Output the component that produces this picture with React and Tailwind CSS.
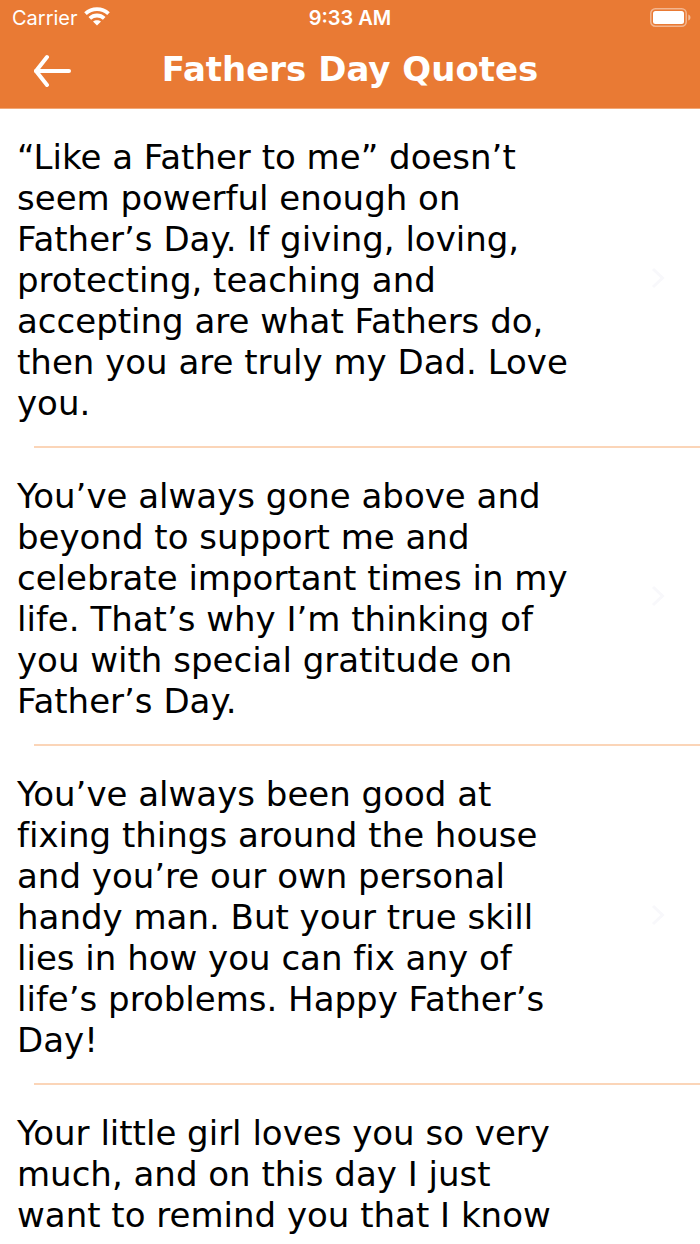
const quotes = [
  "“Like a Father to me” doesn’t seem powerful enough on Father’s Day. If giving, loving, protecting, teaching and accepting are what Fathers do, then you are truly my Dad. Love you.",
  "You’ve always gone above and beyond to support me and celebrate important times in my life. That’s why I’m thinking of you with special gratitude on Father’s Day.",
  "You’ve always been good at fixing things around the house and you’re our own personal handy man. But your true skill lies in how you can fix any of life’s problems. Happy Father’s Day!",
  "Your little girl loves you so very much, and on this day I just want to remind you that I know",
];

const WifiIcon = () => (
  <svg className="mb-0.5" width="26" height="20" viewBox="0 0 26 20" fill="none" stroke="white" strokeWidth="3.8">
    <path d="M1.5 6.6C8 0.6 18 0.6 24.5 6.6" />
    <path d="M5.8 11.4C10 7.5 16 7.5 20.2 11.4" />
    <path d="M13 18.6L9 14.6C11.3 12.8 14.7 12.8 17 14.6Z" fill="white" stroke="none" />
  </svg>
);

const BatteryIcon = () => (
  <svg width="42" height="20" viewBox="0 0 42 20">
    <rect x="0.8" y="0.8" width="35.4" height="17.4" rx="4.5" fill="none" stroke="white" strokeOpacity="0.45" strokeWidth="1.5" />
    <rect x="3" y="3" width="31" height="13" rx="2.5" fill="white" />
    <path d="M38.3 6.5C41.2 7.5 41.2 11.5 38.3 12.5Z" fill="white" fillOpacity="0.5" />
  </svg>
);

const StatusBar = () => {
  return (
    <div className="grid grid-cols-3 items-center h-9 px-3 font-['Inter','Liberation_Sans',sans-serif] text-xl text-white">
      <div className="flex items-center gap-1.5">
        <span>Carrier</span>
        <WifiIcon />
      </div>
      <span className="text-center font-semibold">9:33 AM</span>
      <div className="-mr-1 flex justify-end">
        <BatteryIcon />
      </div>
    </div>
  );
};

const QuoteRow = ({ quote }) => {
  return (
    <li className="group">
      <button type="button" className="flex w-full items-center justify-between pl-[17px] pr-[35px] pt-7 pb-[22px] text-left group-last:min-h-96">
        <span className="flex-1 self-start text-[34px] leading-[41px] [font-variant-ligatures:none]">{quote}</span>
        <span className="flex w-[88px] shrink-0 justify-end pb-1.5">
          <svg width="14" height="24" viewBox="0 0 14 24" fill="none" stroke="#f8f8fb" strokeWidth="3">
            <path d="M2 3L11.5 12L2 21" />
          </svg>
        </span>
      </button>
      <div className="ml-[34px] h-0.5 bg-[#fbd5b8] group-last:hidden" />
    </li>
  );
};

const App = () => {
  return (
    <div className="h-screen overflow-hidden bg-white font-['DejaVu_Sans',Verdana,sans-serif] text-black">
      <header className="border-b border-[#f2a877] bg-[#e97a34]">
        <StatusBar />
        <div className="flex items-center h-[72px] px-8 pb-1.5">
          <button type="button" aria-label="Back" className="w-10 shrink-0">
            <svg width="40" height="36" viewBox="0 0 40 36" fill="none" stroke="white" strokeWidth="4" strokeLinecap="round" strokeLinejoin="round">
              <path d="M37 20H4" />
              <path d="M15 6L4 20L15 34" />
            </svg>
          </button>
          <h1 className="flex-1 text-center text-[34px] leading-[41px] font-bold text-white">Fathers Day Quotes</h1>
          <div className="w-10 shrink-0" />
        </div>
      </header>
      <ul>
        {quotes.map((quote, ind) => (
          <QuoteRow key={ind} quote={quote} />
        ))}
      </ul>
    </div>
  );
};

export default App;
